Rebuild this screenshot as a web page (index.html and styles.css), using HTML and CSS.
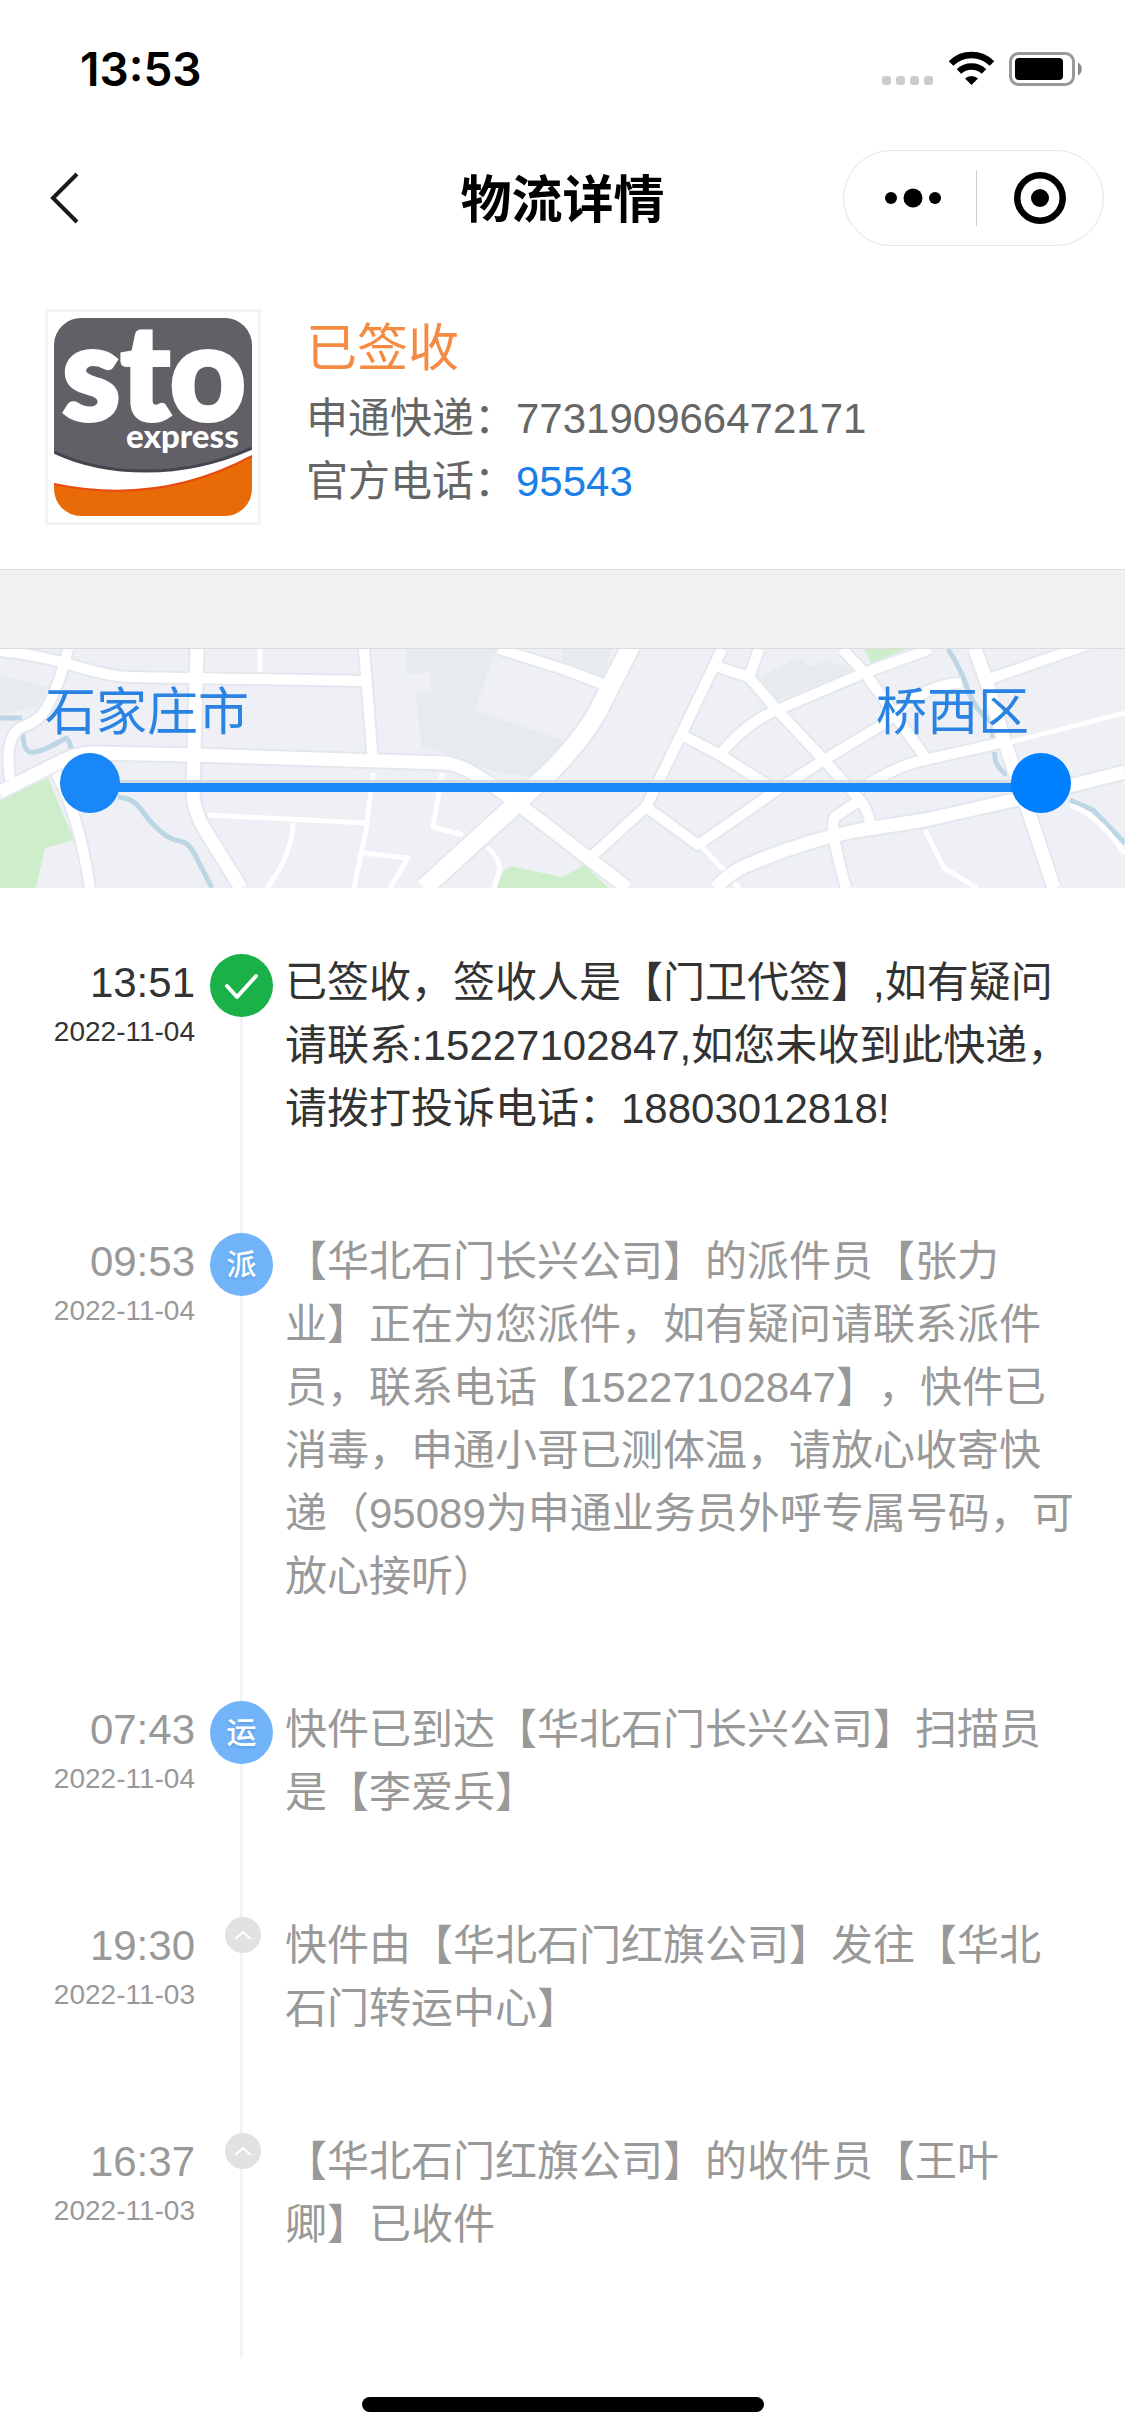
FILE: index.html
```html
<!DOCTYPE html>
<html lang="zh-CN">
<head>
<meta charset="utf-8">
<meta name="viewport" content="width=device-width, initial-scale=1">
<title>物流详情</title>
<link rel="stylesheet" href="styles.css">
</head>
<body>
<div class="status-bar">
  <span class="clock">13:53</span>
  <svg class="status-icons" width="202" height="36" viewBox="0 0 202 36" aria-hidden="true">
    <g fill="#cccccc">
      <rect x="1" y="25" width="9" height="9" rx="3"/>
      <rect x="15" y="25" width="9" height="9" rx="3"/>
      <rect x="29" y="25" width="9" height="9" rx="3"/>
      <rect x="43" y="25" width="9" height="9" rx="3"/>
    </g>
    <g fill="none" stroke="#000" stroke-width="6.500">
      <path d="M70 12.500a29 29 0 0 1 41 0"/>
      <path d="M78 20.500a18 18 0 0 1 25 0"/>
    </g>
    <path d="M84 27.500a9.500 9.500 0 0 1 13 0L90.500 34z"/>
    <rect x="129.500" y="2.500" width="63" height="31" rx="8" fill="none" stroke="#999" stroke-width="3"/>
    <rect x="134" y="7" width="48" height="22" rx="4"/>
    <path d="M197 11.500c5 2.500 5 10.500 0 13z" fill="#888"/>
  </svg>
</div>
<header class="nav">
  <button class="back" type="button" aria-label="返回">
    <svg width="30" height="54" viewBox="0 0 30 54" aria-hidden="true"><path d="M27 3L3 27l24 24" fill="none" stroke="#1a1a1a" stroke-width="4"/></svg>
  </button>
  <h1 class="title">物流详情</h1>
  <div class="capsule">
    <button class="more" type="button" aria-label="更多">
      <svg width="58" height="20" viewBox="0 0 58 20" aria-hidden="true"><circle cx="7" cy="10" r="6"/><circle cx="29" cy="10" r="9.500"/><circle cx="51" cy="10" r="6"/></svg>
    </button>
    <span class="divider"></span>
    <button type="button" aria-label="关闭">
      <svg width="52" height="52" viewBox="0 0 52 52" aria-hidden="true"><circle cx="26" cy="26" r="22.700" fill="none" stroke="#000" stroke-width="6.500"/><circle cx="26" cy="26" r="9"/></svg>
    </button>
  </div>
</header>
<main>
  <section class="summary">
    <div class="logo">
      <svg viewBox="0 0 198 198" role="img" aria-label="sto express">
        <defs><clipPath id="tile"><rect width="198" height="198" rx="27"/></clipPath></defs>
        <g clip-path="url(#tile)">
          <rect width="198" height="198" fill="#fff"/>
          <path d="M0 0H198V130Q146 153 92 153Q40 153 0 134z" fill="#626066"/>
          <path d="M0 134Q40 153 92 153Q146 153 198 130" fill="none" stroke="#454550" stroke-width="3"/>
          <path d="M0 166Q105 188 198 138V198H0z" fill="#e86b08"/>
          <path d="M0 166Q105 188 198 138" fill="none" stroke="#e84a10" stroke-width="2"/>
        </g>
        <g class="logo-text">
          <text class="logo-name" x="8" y="102">sto</text>
          <text class="logo-sub" x="72" y="130">express</text>
        </g>
      </svg>
    </div>
    <div class="info">
      <p class="state">已签收</p>
      <p>申通快递：773190966472171</p>
      <p>官方电话：<a href="tel:95543">95543</a></p>
    </div>
  </section>

  <section class="route">
    <svg class="map" viewBox="0 0 1125 239" preserveAspectRatio="xMidYMid slice" aria-hidden="true">
      <rect width="1125" height="239" fill="#eef0f5"/>
      <g fill="#e6ebee">
        <path d="M406 0H497L474 61L563 91L539 128L499 124L449 106L422 98L415 44L431 43V23L406 26z"/>
        <path d="M0 26L47 38L38 58L0 66zM563 0H612L603 28L563 16z"/>
        <path d="M759 28L799 8L810 18L828 11L853 21L777 51z"/>
      </g>
      <g fill="#ceeecb">
        <path d="M0 151L48 129L74 191L45 199L36 239H0z"/>
        <path d="M497 239L503 223Q508 217 515 218L562 228L584 216L609 239z"/>
        <path d="M864 0H907L871 14z"/>
      </g>
      <g fill="none" stroke="#bdd6e5" stroke-width="5" stroke-linejoin="round">
        <path d="M0 69H22M23 84Q23 101 30 103Q39 105 66 89Q71 92 72 106"/>
        <path d="M118 148Q133 149 140 159Q162 190 180 192Q189 194 194 204L212 239"/>
        <path d="M948 0Q961 20 968 41T993 74V91M995 103Q993 116 1007 126M1070 151L1093 161L1125 194"/>
      </g>
      <defs>
        <g id="roads" fill="none" stroke-linejoin="round">
          <g class="minor">
            <path d="M260 0V23M208 166L366 174M293 174Q292 206 267 239M363 204L408 209L390 239M373 124L366 181L354 239"/>
            <path d="M442 124L433 178L463 186M487 198Q502 212 499 222L494 239"/>
            <path d="M702 198L724 221M734 234L740 239M1011 93L1125 64M925 181L944 219L977 239M1070 157Q1095 162 1125 205"/>
          </g>
          <g class="mid">
            <path d="M0 2Q32 5 65 14Q110 28 130 28L366 32M68 0Q61 32 47 58Q40 72 22 78Q4 86 10 131M56 124Q79 166 90 239M364 0L373 113"/>
            <path d="M499 0L563 20L605 36M722 0L680 88L646 158L591 208M759 0L749 28L718 18M749 28L777 61L824 111L860 151Q868 160 871 178"/>
            <path d="M930 0L864 24L777 61Q745 74 720 106M842 0L865 24L925 108M682 86L720 106L774 140"/>
            <path d="M646 158L698 196L777 141L824 111L885 74Q925 34 961 34M860 140Q900 115 925 111L1000 94"/>
            <path d="M986 31L1090 -5M860 151L835 168Q828 175 846 239"/>
          </g>
          <g class="main-road">
            <path d="M197 0L194 101L193 145Q194 163 205 181L241 239M0 143L54 116Q76 104 93 104L194 106L445 114Q464 114 517 154L627 239"/>
            <path d="M716 239Q730 222 755 213Q805 192 855 182L925 171L1014 151L1125 123M975 0L986 31L1004 91L1029 164L1054 239"/>
          </g>
          <path class="avenue" d="M424 239L517 154L553 120Q590 82 604 50L632 -5"/>
        </g>
      </defs>
      <use href="#roads" class="casing"/>
      <use href="#roads" class="surface"/>
    </svg>
    <div class="places"><span>石家庄市</span><span>桥西区</span></div>
    <div class="track"><i class="stop"></i><i class="line"></i><i class="stop end"></i></div>
  </section>

  <ol class="timeline">
    <li class="event current">
      <div class="when"><time>13:51</time><small>2022-11-04</small></div>
      <div class="rail"><span class="badge done"><svg width="36" height="30" viewBox="0 0 36 30" aria-hidden="true"><path d="M3 15l10 11L32 5" fill="none" stroke="#fff" stroke-width="4" stroke-linecap="round" stroke-linejoin="round"/></svg></span></div>
      <p class="text">已签收，签收人是【门卫代签】,如有疑问请联系:15227102847,如您未收到此快递，请拨打投诉电话：18803012818!</p>
    </li>
    <li class="event">
      <div class="when"><time>09:53</time><small>2022-11-04</small></div>
      <div class="rail"><span class="badge">派</span></div>
      <p class="text">【华北石门长兴公司】的派件员【张力业】正在为您派件，如有疑问请联系派件员，联系电话【15227102847】，快件已消毒，申通小哥已测体温，请放心收寄快递（95089为申通业务员外呼专属号码，可放心接听）</p>
    </li>
    <li class="event">
      <div class="when"><time>07:43</time><small>2022-11-04</small></div>
      <div class="rail"><span class="badge">运</span></div>
      <p class="text">快件已到达【华北石门长兴公司】扫描员是【李爱兵】</p>
    </li>
    <li class="event">
      <div class="when"><time>19:30</time><small>2022-11-03</small></div>
      <div class="rail"><span class="node"><svg width="20" height="12" viewBox="0 0 20 12" aria-hidden="true"><path d="M2 10l8-7 8 7" fill="none" stroke="#fff" stroke-width="2"/></svg></span></div>
      <p class="text">快件由【华北石门红旗公司】发往【华北石门转运中心】</p>
    </li>
    <li class="event">
      <div class="when"><time>16:37</time><small>2022-11-03</small></div>
      <div class="rail"><span class="node"><svg width="20" height="12" viewBox="0 0 20 12" aria-hidden="true"><path d="M2 10l8-7 8 7" fill="none" stroke="#fff" stroke-width="2"/></svg></span></div>
      <p class="text">【华北石门红旗公司】的收件员【王叶卿】已收件</p>
    </li>
  </ol>
</main>
<div class="home-indicator"></div>
</body>
</html>
```
FILE: styles.css
```css
* { box-sizing: border-box; }

body {
  margin: 0;
  min-height: 100vh;
  display: flex;
  flex-direction: column;
  background: #fff;
  color: #666;
  font-family: "Liberation Sans", "Noto Sans CJK SC", sans-serif;
  font-size: 42px;
  line-height: 63px;
  text-spacing-trim: space-all;
}

h1, p, ol { margin: 0; padding: 0; }
svg { display: block; }
button { border: 0; padding: 0; background: none; color: #000; }

.status-bar {
  height: 132px;
  padding: 6px 42px 0 80px;
  display: flex;
  align-items: center;
  justify-content: space-between;
}
.clock { font: 600 46px/54px Inter, sans-serif; color: #000; }

.nav {
  height: 132px;
  padding: 0 21px;
  display: grid;
  grid-template-columns: 1fr auto 1fr;
  align-items: center;
}
.back { justify-self: start; margin-left: 29px; }
.title { padding-top: 5px; font-size: 51px; line-height: 72px; font-weight: 700; color: #000; }
.capsule {
  justify-self: end;
  width: 261px;
  height: 96px;
  display: flex;
  align-items: center;
  border: 1px solid #e5e5e5;
  border-radius: 48px;
}
.capsule button { flex: 1; display: flex; justify-content: center; }
.capsule .more { padding-left: 6px; }
.capsule .divider { width: 1px; height: 56px; background: #ccc; }

.summary {
  display: flex;
  gap: 45px;
  padding: 45px 45px 44px;
  border-bottom: 1px solid #ddd;
}
.logo { flex: none; width: 216px; height: 216px; padding: 6px; border: 3px solid #f2f2f2; }
.logo svg { overflow: visible; }
.logo-text { fill: #fff; stroke: #fff; font-family: Lato, sans-serif; font-weight: 900; }
.logo-name { font-size: 132px; stroke-width: 4px; }
.logo-sub { font-size: 33px; stroke-width: 0; }
.info { padding-top: 2px; }
.state { font-size: 51px; line-height: 76px; color: #f58b42; }
.info a { color: #1a7fe6; text-decoration: none; }

.route {
  position: relative;
  margin-top: 78px;
  padding: 26px 0 75px;
  border-top: 1px solid #dcdcdc;
  box-shadow: 0 -78px #f1f1f1;
}
.map { position: absolute; inset: 0; width: 100%; height: 100%; }
.casing { stroke: #e3e8ee; --case: 4px; }
.surface { stroke: #fff; --case: 0px; }
.minor { stroke-width: 5px; }
.mid { stroke-width: calc(10px + var(--case)); }
.main-road { stroke-width: calc(13px + var(--case)); }
.avenue { stroke-width: calc(18px + var(--case)); }
.places {
  position: relative;
  display: flex;
  justify-content: space-between;
  padding: 0 96px 0 45px;
  font-size: 51px;
  line-height: 76px;
  color: #2a83e3;
}
.track { position: relative; display: flex; align-items: center; margin: 2px 54px 0 60px; }
.stop { width: 60px; height: 60px; border-radius: 50%; background: #1a87f8; }
.stop.end { background: #007fff; z-index: 1; }
.line { flex: 1; height: 12px; margin: 6px -9px 0; border-top: 3px solid #d8dbe6; background: #1a87f8; }
.stop:first-child { z-index: 1; }

.timeline { list-style: none; padding: 63px 45px 0 0; color: #999; }
.event { display: flex; }
.current { color: #333; }
.when { flex: none; width: 195px; text-align: right; }
.when time, .when small { display: block; }
.when small { font-size: 28px; line-height: 36px; }
.rail {
  flex: none;
  width: 63px;
  margin: 0 12px 0 15px;
  padding-top: 3px;
  background: linear-gradient(#f3f3f3, #f3f3f3) 30px 0 / 3px 100% no-repeat;
}
.current .rail { background-position: 30px 3px; }
.badge, .node { display: flex; align-items: center; justify-content: center; border-radius: 50%; color: #fff; }
.badge { width: 63px; height: 63px; background: #72b4fa; font-size: 30px; font-weight: 500; text-shadow: 0 2px 3px #5f9fe4; }
.badge.done { background: #19b148; }
.node { width: 36px; height: 36px; margin-left: 15px; background: #e2e2e2; }
.text { flex: 1; padding-bottom: 90px; }
.event:last-child .text { padding-bottom: 101px; }

.home-indicator { width: 402px; height: 15px; margin: auto auto 24px; border-radius: 8px; background: #000; }
```
